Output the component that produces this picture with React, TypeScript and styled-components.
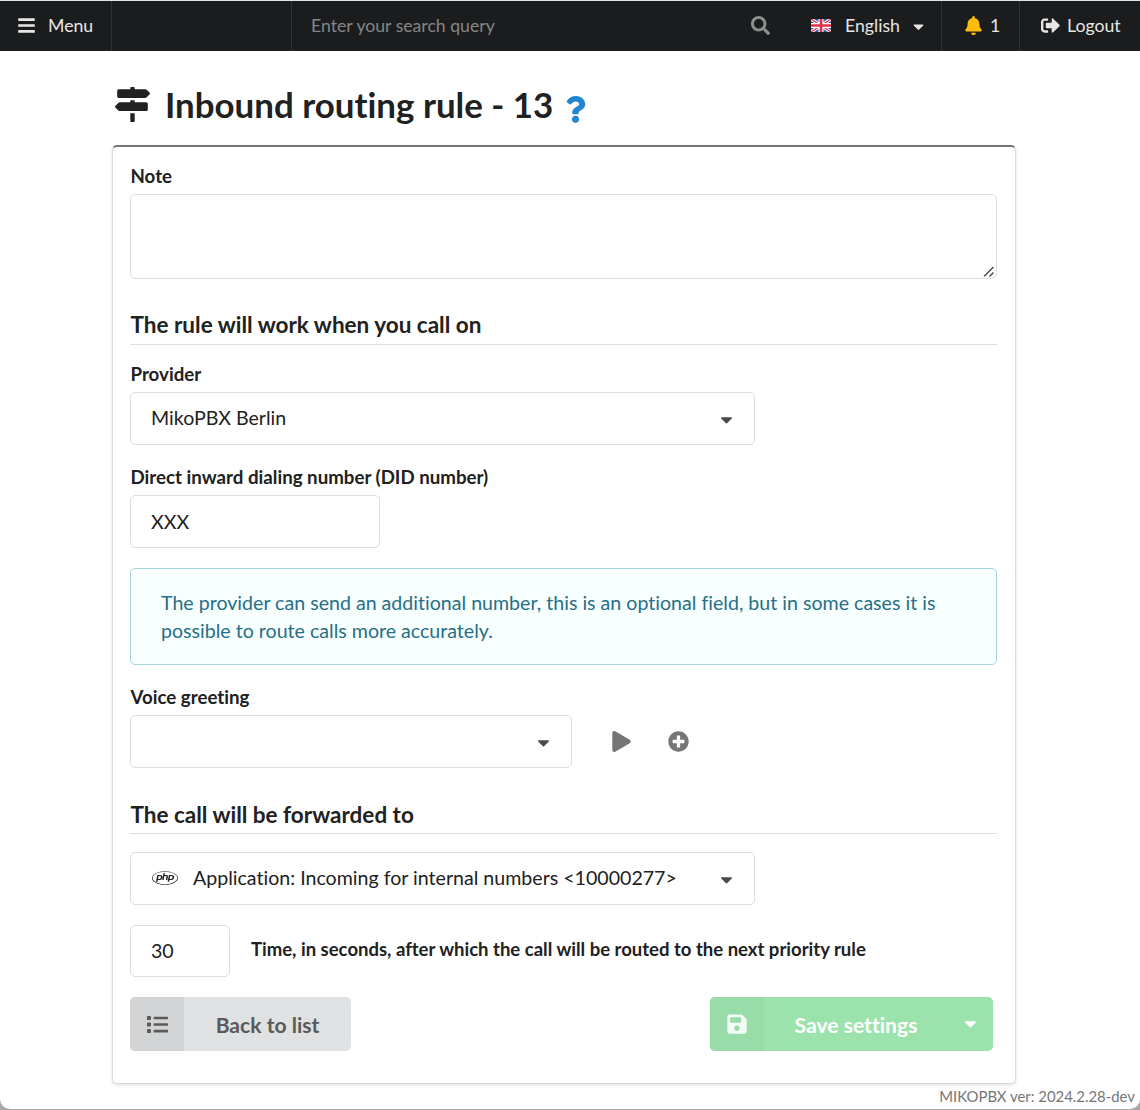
import React from "react";
import styled, { createGlobalStyle } from "styled-components";
import {
  FaBars,
  FaBell,
  FaCaretDown,
  FaList,
  FaMapSigns,
  FaPhp,
  FaPlay,
  FaPlusCircle,
  FaQuestion,
  FaSave,
  FaSearch,
  FaSignOutAlt,
} from "react-icons/fa";

const GlobalStyle = createGlobalStyle`
  * { box-sizing: border-box; }
  html, body { margin: 0; background: #a9a9a9; }
  body, input, textarea, button {
    font-family: Lato, "Open Sans", sans-serif;
    font-variant-ligatures: none;
  }
  svg { display: block; flex: none; }
`;

const Window = styled.div`
  display: flex;
  flex-direction: column;
  width: 1140px;
  height: 1109px;
  background: #fff;
  border-top: 1px solid #dfe8e6;
  border-radius: 0 0 10px 10px;
  overflow: hidden;
  color: #212121;
`;

const TopBar = styled.header`
  display: flex;
  flex: none;
  height: 50px;
  background: #1b1c1d;
  color: #e6e6e6;
  font-size: 17.7px;
`;

const BarItem = styled.div<{ $width?: number; $pad?: number; $gap?: number; $divider?: boolean }>`
  display: flex;
  align-items: center;
  flex: none;
  width: ${(p) => (p.$width ? `${p.$width}px` : "auto")};
  padding: 0 0 1px ${(p) => p.$pad ?? 0}px;
  gap: ${(p) => p.$gap ?? 0}px;
  border-right: ${(p) => (p.$divider ? "1px solid #303132" : "none")};
`;

const BarText = styled.span`
  line-height: 22px;
`;

const Search = styled.input`
  flex: 1;
  min-width: 0;
  height: 22px;
  padding: 0;
  border: 0;
  outline: 0;
  background: transparent;
  color: #e6e6e6;
  font-size: 17.65px;
  &::placeholder { color: #858686; opacity: 1; }
`;

const SearchIcon = styled(FaSearch)`
  margin-right: 16px;
  color: #8d8e8e;
`;

const LanguageCaret = styled(FaCaretDown)`
  margin: 1px 0 0 -4px;
`;

const Header = styled.h1`
  display: flex;
  align-items: center;
  height: 94px;
  margin: 0;
  padding: 13px 0 0 115px;
  font-size: 34.9px;
  font-weight: 700;
  line-height: 42px;
`;

const Title = styled.span`
  margin-left: 15px;
`;

const Help = styled.span`
  margin: 9px 0 0 9px;
  color: #2185d0;
`;

const Segment = styled.main`
  display: flex;
  flex-direction: column;
  align-items: flex-start;
  width: 904px;
  height: 939px;
  margin-left: 112px;
  padding: 16px 18px 0 17px;
  border: 1px solid #d9dadb;
  border-top: 2px solid #767676;
  border-radius: 5px;
  box-shadow: 0 1px 3px rgba(34, 36, 38, 0.15);
`;

const Label = styled.label<{ $gap?: number }>`
  display: block;
  height: 26px;
  margin: ${(p) => p.$gap ?? 0}px 0 5px;
  padding-left: 0.5px;
  font-size: 18.7px;
  font-weight: 700;
  line-height: 26px;
  white-space: nowrap;
`;

const NoteBox = styled.div`
  position: relative;
  flex: none;
  width: 867px;
  height: 85px;
`;

const Note = styled.textarea`
  display: block;
  width: 100%;
  height: 100%;
  border: 1px solid #dededf;
  border-radius: 5px;
  outline: 0;
  background: #fff;
  resize: none;
`;

const Grip = styled.svg`
  position: absolute;
  right: 2px;
  bottom: 1px;
`;

const SectionTitle = styled.h2<{ $top: number; $height?: number }>`
  width: 867px;
  height: ${(p) => p.$height ?? 34}px;
  margin: ${(p) => p.$top}px 0 0;
  padding-left: 0.5px;
  border-bottom: 1px solid #dededf;
  font-size: 22.5px;
  font-weight: 700;
  line-height: 28px;
`;

const Dropdown = styled.div<{ $width: number; $top?: number }>`
  display: flex;
  align-items: center;
  flex: none;
  width: ${(p) => p.$width}px;
  height: 53px;
  margin-top: ${(p) => p.$top ?? 0}px;
  padding: 0 18px 0 20px;
  border: 1px solid #dededf;
  border-radius: 5px;
  font-size: 19.6px;
`;

const Value = styled.span`
  flex: 1;
  white-space: nowrap;
  padding-bottom: 3px;
`;

const Caret = styled(FaCaretDown)`
  margin: 2px 0 0;
  color: #4a4a4a;
`;

const PhpIcon = styled(FaPhp)`
  margin: 0 15px 2px 1px;
`;

const Field = styled.input<{ $width: number; $height?: number }>`
  flex: none;
  width: ${(p) => p.$width}px;
  height: ${(p) => p.$height ?? 53}px;
  padding: 0 20px 1px;
  border: 1px solid #dededf;
  border-radius: 5px;
  outline: 0;
  color: #212121;
  font-size: 19.6px;
`;

const Message = styled.p`
  flex: none;
  width: 867px;
  height: 97px;
  margin: 20px 0 0;
  padding: 20px 30px;
  border: 1px solid #a9d5de;
  border-radius: 5px;
  background: #f8ffff;
  color: #276f86;
  font-size: 19.6px;
  line-height: 28px;
`;

const Row = styled.div<{ $top?: number }>`
  display: flex;
  align-items: center;
  width: 863px;
  margin-top: ${(p) => p.$top ?? 0}px;
`;

const IconButton = styled.button<{ $left: number }>`
  margin: 0 0 1px ${(p) => p.$left}px;
  padding: 0;
  border: 0;
  background: transparent;
  color: #767676;
`;

const TimeLabel = styled.label`
  margin: 0 0 4px 21px;
  font-size: 18.53px;
  font-weight: 700;
  white-space: nowrap;
`;

const Button = styled.div<{ $width: number; $bg: string; $color: string }>`
  display: flex;
  width: ${(p) => p.$width}px;
  height: 54px;
  border-radius: 5px;
  overflow: hidden;
  background: ${(p) => p.$bg};
  color: ${(p) => p.$color};
  font-size: 21.1px;
  font-weight: 700;
`;

const ButtonIcon = styled.span<{ $bg: string }>`
  display: flex;
  align-items: center;
  justify-content: center;
  width: 54px;
  background: ${(p) => p.$bg};
`;

const ButtonText = styled.span`
  display: flex;
  flex: 1;
  align-items: center;
  justify-content: center;
`;

const ButtonCaret = styled.span`
  display: flex;
  align-items: center;
  justify-content: center;
  width: 45px;
  padding-bottom: 2px;
`;

const Spacer = styled.div`
  flex: 1;
`;

const Footer = styled.footer`
  padding-right: 5px;
  color: #767676;
  font-size: 14.9px;
  line-height: 24px;
  text-align: right;
`;

const Flag = () => (
  <svg width="20" height="13" viewBox="0 0 60 40" preserveAspectRatio="none">
    <rect width="60" height="40" fill="#3658a8" />
    <path d="M0 0L60 40M60 0L0 40" stroke="#fff" strokeWidth="10" />
    <path d="M0 0L60 40M60 0L0 40" stroke="#e0364b" strokeWidth="4" />
    <path d="M30 0V40M0 20H60" stroke="#fff" strokeWidth="15" />
    <path d="M30 0V40M0 20H60" stroke="#e0304a" strokeWidth="8" />
  </svg>
);

export default function App() {
  return (
    <>
      <GlobalStyle />
      <Window>
        <TopBar>
          <BarItem $width={112} $pad={17} $gap={12} $divider>
            <FaBars size={19} />
            <BarText>Menu</BarText>
          </BarItem>
          <BarItem $width={180} $divider />
          <BarItem $width={494} $pad={19}>
            <Search placeholder="Enter your search query" />
            <SearchIcon size={19} />
          </BarItem>
          <BarItem $width={156} $pad={25} $gap={14} $divider>
            <Flag />
            <BarText>English</BarText>
            <LanguageCaret size={17} />
          </BarItem>
          <BarItem $width={78} $pad={22} $gap={7} $divider>
            <FaBell size={19} color="#fbbd08" />
            <BarText>1</BarText>
          </BarItem>
          <BarItem $pad={21} $gap={7}>
            <FaSignOutAlt size={19} />
            <BarText>Logout</BarText>
          </BarItem>
        </TopBar>
        <Header>
          <FaMapSigns size={35} />
          <Title>Inbound routing rule - 13</Title>
          <Help>
            <FaQuestion size={27} />
          </Help>
        </Header>
        <Segment>
          <Label>Note</Label>
          <NoteBox>
            <Note aria-label="Note" />
            <Grip width="12" height="12" viewBox="0 0 12 12" fill="none" stroke="#4c4c4c" strokeWidth="1.5">
              <path d="M1 10.5L10.5 1M6.5 10.5L10.5 6.5" />
            </Grip>
          </NoteBox>
          <SectionTitle $top={32}>The rule will work when you call on</SectionTitle>
          <Label $gap={16}>Provider</Label>
          <Dropdown $width={625}>
            <Value>MikoPBX Berlin</Value>
            <Caret size={19} />
          </Dropdown>
          <Label $gap={19}>Direct inward dialing number (DID number)</Label>
          <Field $width={250} defaultValue="XXX" />
          <Message>
            The provider can send an additional number, this is an optional field, but in some cases it is
            possible to route calls more accurately.
          </Message>
          <Label $gap={19}>Voice greeting</Label>
          <Row>
            <Dropdown $width={442}>
              <Value />
              <Caret size={19} />
            </Dropdown>
            <IconButton $left={39} aria-label="Play">
              <FaPlay size={21} />
            </IconButton>
            <IconButton $left={36} aria-label="Add">
              <FaPlusCircle size={21} />
            </IconButton>
          </Row>
          <SectionTitle $top={33} $height={33}>The call will be forwarded to</SectionTitle>
          <Dropdown $width={625} $top={18}>
            <PhpIcon size={26} />
            <Value>Application: Incoming for internal numbers &lt;10000277&gt;</Value>
            <Caret size={19} />
          </Dropdown>
          <Row $top={20}>
            <Field $width={100} $height={52} defaultValue="30" />
            <TimeLabel>Time, in seconds, after which the call will be routed to the next priority rule</TimeLabel>
          </Row>
          <Row $top={20}>
            <Button $width={221} $bg="#e0e1e2" $color="#5a5a5a">
              <ButtonIcon $bg="#d3d4d5">
                <FaList size={21} />
              </ButtonIcon>
              <ButtonText>Back to list</ButtonText>
            </Button>
            <Spacer />
            <Button $width={283} $bg="#9ce2ad" $color="#fff">
              <ButtonIcon $bg="#98dcaa">
                <FaSave size={22} color="#f3fcf5" />
              </ButtonIcon>
              <ButtonText>Save settings</ButtonText>
              <ButtonCaret>
                <FaCaretDown size={19} />
              </ButtonCaret>
            </Button>
          </Row>
        </Segment>
        <Footer>MIKOPBX ver: 2024.2.28-dev</Footer>
      </Window>
    </>
  );
}
